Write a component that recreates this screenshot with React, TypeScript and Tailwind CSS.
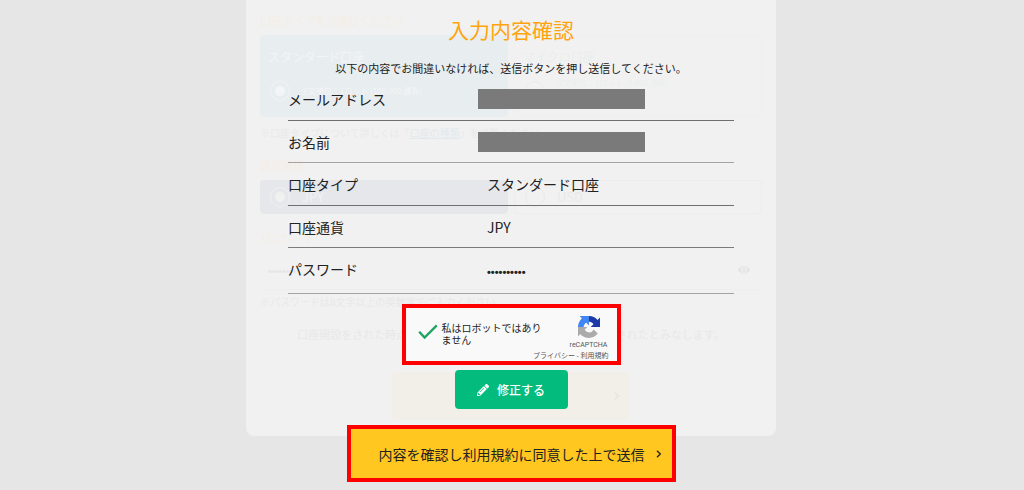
import React from "react";

type Row = { label: string; value?: string; secret?: boolean; height: string };

const rows: Row[] = [
  { label: "メールアドレス", height: "h-[43px] border-[#6f6f6f]" },
  { label: "お名前", height: "h-[42px] border-[#a3a3a3]" },
  { label: "口座タイプ", value: "スタンダード口座", height: "h-[43px] border-[#6f6f6f]" },
  { label: "口座通貨", value: "JPY", height: "h-[42px] border-[#7c7c7c]" },
  { label: "パスワード", value: "••••••••••", secret: true, height: "h-[46px] pb-1 border-[#a3a3a3]" },
];

function AccountForm() {
  return (
    <form inert className="mx-auto h-[436px] max-w-[530px] rounded-b-lg bg-[#f1f1f1] px-3.5 pt-3">
      <fieldset>
        <legend className="text-[11px] leading-4 text-[#f4eee4]">口座タイプをお選びください</legend>
        <div className="mt-[7px] grid grid-cols-2 gap-1.5">
          <label className="block h-[82px] rounded bg-[#e8edf0] px-2 pt-3 text-[#f3f5f6]">
            <span className="block text-xs leading-5">スタンダード口座</span>
            <span className="mt-3.5 flex items-center gap-2.5 text-[8px] leading-4">
              <input
                type="radio"
                name="type"
                defaultChecked
                className="ml-0.5 size-5 appearance-none rounded-full border border-[#f3f5f6] bg-[#f3f5f6] bg-clip-content p-1"
              />
              注文単位：1ロット (100,000 通貨)
            </span>
          </label>
          <label className="block h-[82px] rounded border border-[#efefef] px-2 pt-[11px] text-[#ebeeee]">
            <span className="block text-xs leading-5">マイクロ口座</span>
            <span className="mt-2 flex items-start gap-2.5 text-[8px] leading-4">
              <input type="radio" name="type" className="mt-1.5 ml-0.5 size-5 appearance-none rounded-full border border-[#ebebeb]" />
              注文単位：1ロット (1,000 通貨)
            </span>
          </label>
        </div>
      </fieldset>
      <p className="mt-2 text-[10px] leading-4 text-[#e9e9e9]">
        ※口座タイプについて詳しくは「
        <a href="#types" className="text-[#e2e9ed] underline">口座の種類</a>
        」をご覧ください
      </p>
      <fieldset className="mt-4">
        <legend className="text-[11px] leading-4 text-[#f4eee4]">通貨選択</legend>
        <div className="mt-[7px] grid grid-cols-2 gap-1.5">
          <label className="flex h-[34px] items-center gap-3 rounded bg-[#e5e7ea] px-2.5 text-[13px] text-[#f1f1f2]">
            <input
              type="radio"
              name="currency"
              defaultChecked
              className="size-5 appearance-none rounded-full border border-[#f1f1f2] bg-[#f1f1f2] bg-clip-content p-1"
            />
            JPY
          </label>
          <label className="flex h-[34px] items-center gap-3 rounded border border-[#ededed] px-2.5 text-[13px] text-[#e9e9e9]">
            <input type="radio" name="currency" className="size-5 appearance-none rounded-full border border-[#e9e9e9]" />
            USD
          </label>
        </div>
      </fieldset>
      <label htmlFor="new-password" className="mt-4 block text-[11px] leading-4 text-[#f4eee4]">
        パスワード
      </label>
      <div className="mt-2 flex h-9 items-center border-b border-[#eeeeee] px-2">
        <input
          id="new-password"
          type="password"
          defaultValue="password"
          className="min-w-0 flex-1 bg-transparent font-['Liberation_Sans'] text-[10px] text-[#e5e5e5]"
        />
        <svg viewBox="0 0 24 16" className="mr-1 mb-1 h-2 w-3" fill="none">
          <path d="M0 8Q5 0 12 0T24 8Q19 16 12 16T0 8Z" fill="#e3e3e3" />
          <circle cx="12" cy="8" r="5.5" fill="#e7e7e7" stroke="#f1f1f1" strokeWidth="2" />
        </svg>
      </div>
      <p className="mt-1 text-[10px] leading-4 text-[#e8e8e8]">※パスワードは8文字以上の英数字でご入力ください。</p>
      <p className="mt-4 text-center text-[11px] leading-4 whitespace-nowrap text-[#e8e8e8]">
        口座開設をされた時点で、お客様は利用規約の全ての内容に同意されたとみなします。
      </p>
      <div className="mx-auto mt-[30px] flex h-12 max-w-[238px] items-center justify-end rounded bg-[#f2efe9] pr-2.5">
        <svg viewBox="0 0 8 12" className="h-2 w-1.5" fill="none" stroke="#e6e3dd" strokeWidth="2">
          <path d="m1 1 5 5-5 5" />
        </svg>
      </div>
    </form>
  );
}

function RecaptchaLogo() {
  return (
    <svg viewBox="0 0 64 64" className="h-[22px] w-[22px]" aria-hidden="true">
      <path
        fill="#1c3aa9"
        d="M64 31.955l-.033-1.37V4.687l-7.16 7.16C50.948 4.674 42.033.093 32.05.093c-10.4 0-19.622 4.96-25.458 12.64l11.736 11.86a15.55 15.55 0 0 1 4.754-5.334c2.05-1.6 4.952-2.906 8.968-2.906.485 0 .86.057 1.135.163 4.976.393 9.288 3.14 11.828 7.124l-8.307 8.307L64 31.953"
      />
      <path
        fill="#4285f4"
        d="M31.862.094l-1.37.033H4.594l7.16 7.16C4.58 13.147 0 22.06 0 32.046c0 10.4 4.96 19.622 12.64 25.458L24.5 45.768a15.55 15.55 0 0 1-5.334-4.754c-1.6-2.05-2.906-4.952-2.906-8.968 0-.485.057-.86.163-1.135.393-4.976 3.14-9.288 7.124-11.828l8.307 8.307L31.86.095"
      />
      <path
        fill="#ababab"
        d="M.001 32.045l.033 1.37v25.898l7.16-7.16c5.86 7.173 14.774 11.754 24.76 11.754 10.4 0 19.622-4.96 25.458-12.64l-11.736-11.86a15.55 15.55 0 0 1-4.754 5.334c-2.05 1.6-4.952 2.906-8.968 2.906-.485 0-.86-.057-1.135-.163-4.976-.393-9.288-3.14-11.828-7.124l8.307-8.307L0 32.046"
      />
    </svg>
  );
}

function ConfirmDialog() {
  return (
    <section
      role="dialog"
      aria-labelledby="confirm-title"
      className="absolute inset-x-0 top-0 flex flex-col items-center pr-0.5 pt-3.5"
    >
      <h1 id="confirm-title" className="text-[21px] leading-[30px] text-[#ffa40d]">入力内容確認</h1>
      <p className="mt-4 text-[11px] leading-4">以下の内容でお間違いなければ、送信ボタンを押し送信してください。</p>
      <dl className="mt-0.5 w-full max-w-[446px] text-sm">
        {rows.map((row) => (
          <div key={row.label} className={`flex items-center border-b ${row.height}`}>
            <dt className="w-[190px]">{row.label}</dt>
            {row.value ? (
              <dd className={row.secret ? "pt-2 pl-[9px] font-['Liberation_Sans'] text-[11px] font-bold" : "pl-[9px]"}>{row.value}</dd>
            ) : (
              <dd className="h-5 w-[167px] bg-[#7a7a7a]" />
            )}
          </div>
        ))}
      </dl>
      <div className="mt-2.5 flex h-[61px] w-[219px] border-4 border-[#ff0000] bg-[#f9f9f9]">
        <div className="flex min-w-0 flex-1 items-start gap-1 pt-3.5 pl-3">
          <svg viewBox="0 0 20 16" className="mt-0.5 h-4 w-5 shrink-0" fill="none" stroke="#1fa463" strokeWidth="2.4" aria-hidden="true">
            <path d="m1.2 7.8 5.4 5.8L18.8 1.4" />
          </svg>
          <p className="text-[10px] leading-3 whitespace-nowrap">
            私はロボットではあり
            <br />
            ません
          </p>
        </div>
        <div className="flex shrink-0 flex-col items-end pt-2 pr-2 pl-0 text-[7px] leading-[10px] text-[#555555] -ml-4">
          <div className="flex w-10 flex-col items-center">
            <RecaptchaLogo />
            <span className="mt-0.5 font-[Roboto]">reCAPTCHA</span>
          </div>
          <p className="whitespace-nowrap">
            <a href="#privacy">プライバシー</a> - <a href="#terms">利用規約</a>
          </p>
        </div>
      </div>
      <button type="button" className="mt-[5px] flex h-[39px] w-[113px] items-center justify-center gap-2 rounded bg-[#04bb7e] text-xs font-medium text-white">
        <svg viewBox="0 0 512 512" className="size-3" fill="currentColor" aria-hidden="true">
          <path d="M497.9 142.1l-46.1 46.1c-4.7 4.7-12.3 4.7-17 0l-111-111c-4.7-4.7-4.7-12.3 0-17l46.1-46.1c18.7-18.7 49.1-18.7 67.9 0l60.1 60.1c18.8 18.7 18.8 49.1 0 67.9zM284.2 99.8L21.6 362.4.4 483.9c-2.9 16.4 11.4 30.6 27.8 27.8l121.5-21.3 262.6-262.6c4.7-4.7 4.7-12.3 0-17l-111-111c-4.8-4.7-12.4-4.7-17.1 0zM124.1 339.9c-5.5-5.5-5.5-14.3 0-19.8l154-154c5.5-5.5 14.3-5.5 19.8 0s5.5 14.3 0 19.8l-154 154c-5.5 5.5-14.3 5.5-19.8 0zM88 424h48v36.3l-64.5 11.3-31.1-31.1L51.7 376H88v48z" />
        </svg>
        修正する
      </button>
      <button
        type="submit"
        className="mt-4 flex h-[57px] w-[329px] items-center justify-between border-4 border-[#ff0000] bg-[#ffc720] pr-2.5 pl-7 text-sm text-[#222222]"
      >
        内容を確認し利用規約に同意した上で送信
        <svg viewBox="0 0 8 12" className="h-2 w-1.5" fill="none" stroke="currentColor" strokeWidth="2" aria-hidden="true">
          <path d="m1 1 5 5-5 5" />
        </svg>
      </button>
    </section>
  );
}

export default function App() {
  return (
    <main
      lang="ja"
      className="relative min-h-screen bg-[#e6e6e6] font-['Noto_Sans_CJK_JP','Noto_Sans',sans-serif] text-[#222222]"
    >
      <div className="pr-0.5">
        <AccountForm />
      </div>
      <ConfirmDialog />
    </main>
  );
}
